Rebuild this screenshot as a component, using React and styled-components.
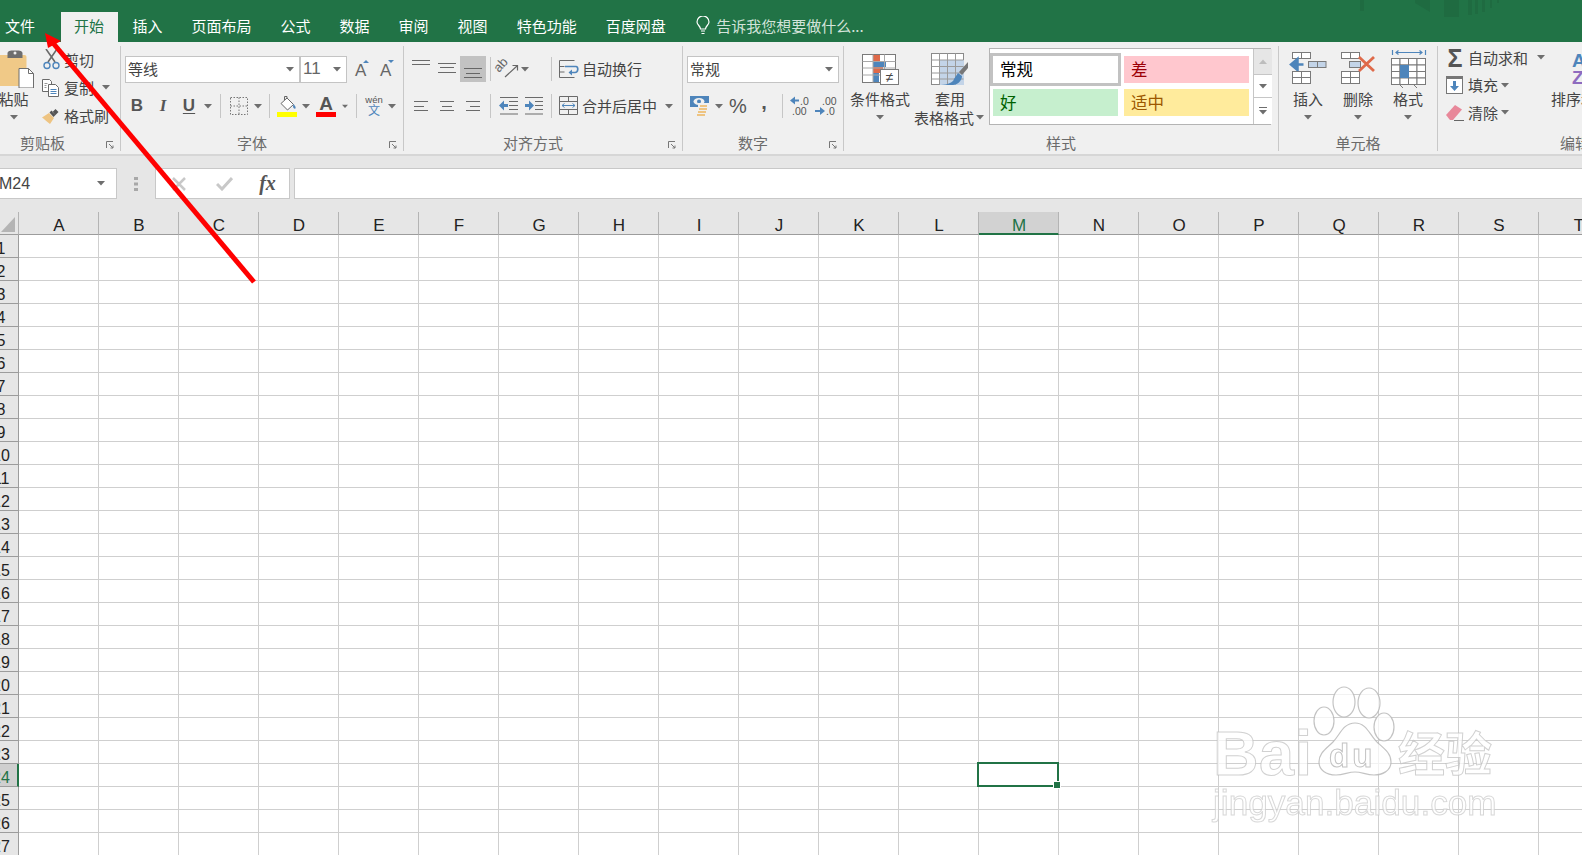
import React from "react";
import styled, { createGlobalStyle } from "styled-components";

const CJK = `"Noto Sans CJK SC", "Liberation Sans", sans-serif`;
const LATIN = `"Liberation Sans", Arial, sans-serif`;
const GREEN = "#217346";
const BLUE = "#4e85bb";
const GRAY = "#6a6a6a";

const Global = createGlobalStyle`
  html, body { margin: 0; padding: 0; background: #fff; }
  body { width: 1582px; height: 855px; overflow: hidden; font-family: ${CJK}; }
  #root { width: 1582px; height: 855px; }
`;

const Page = styled.div`
  position: relative; width: 1582px; height: 855px; overflow: hidden;
  display: flex; flex-direction: column;
`;

/* ---- title + tabs ---- */
const TabBar = styled.div`
  position: relative; flex: none; height: 42px; background: ${GREEN};
  display: flex; align-items: flex-end;
`;
const Tab = styled.div`
  flex: none; height: 30px; line-height: 27px; padding: 0 14.5px;
  font-size: 15px; color: #fff; white-space: nowrap;
`;
const FileTab = styled(Tab)`margin-left: -9.5px; margin-right: 11.5px;`;
const ActiveTab = styled(Tab)`
  background: #f0f0f0; color: ${GREEN}; padding: 0 14px 0 13px;
`;
const Tell = styled.div`
  flex: none; height: 30px; margin-left: 16px; display: flex; align-items: center; gap: 6px;
  font-size: 15px; color: #d3e3da; white-space: nowrap; padding-bottom: 3px; box-sizing: border-box;
`;
const TitleMarks = styled.svg`position: absolute; left: 1340px; top: 0; filter: blur(0.4px);`;

/* ---- ribbon ---- */
const Ribbon = styled.div`
  flex: none; height: 114px; box-sizing: border-box; background: #f0f0f0;
  border-bottom: 2px solid #d6d6d6; display: flex; overflow: hidden;
`;
const Group = styled.div`
  flex: none; width: ${p => p.$w}px; margin-left: ${p => p.$ml || 0}px;
  display: flex; flex-direction: column;
`;
const GroupBody = styled.div`flex: none; height: 91px; display: flex;`;
const GroupLabel = styled.div`
  flex: none; height: 20px; display: flex; align-items: center;
  font-size: 15px; color: #6b6b6b; line-height: 20px;
`;
const GroupName = styled.span`flex: 1; text-align: center;`;
const Launcher = styled.svg`flex: none; margin: 4px 6px 0 6px;`;
const GroupSep = styled.div`
  flex: none; width: 1px; height: 105px; margin-top: 4px; background: #c8c8c8;
`;

const Rows = styled.div`
  display: flex; flex-direction: column; gap: 11px; padding-top: 14px; flex: 1;
`;
const Row = styled.div`
  display: flex; align-items: center; height: 26px; padding-left: ${p => p.$pl || 0}px;
`;
const Tool = styled.div`
  flex: none; width: ${p => p.$w || 26}px; height: 26px; display: flex; align-items: center; justify-content: center;
  background: ${p => (p.$on ? "#c2c2c2" : "transparent")};
`;
const Sep = styled.div`
  flex: none; width: 1px; height: 24px; background: #c6c6c6;
  margin-left: ${p => p.$ml || 0}px; margin-right: ${p => p.$mr || 0}px;
`;
const CaretBox = styled.div`
  flex: none; width: ${p => p.$w || 12}px; margin-left: ${p => p.$ml || 0}px;
  display: flex; align-items: center; justify-content: center;
`;
const Caret = ({ w, ml }) => (
  <CaretBox $w={w} $ml={ml}>
    <svg width="8" height="5" viewBox="0 0 8 5"><path d="M0 0h8L4 4.5z" fill="#6e6e6e" /></svg>
  </CaretBox>
);
const Text = styled.span`
  flex: none; font-size: 15px; color: #444; white-space: nowrap; line-height: 20px;
  margin-left: ${p => p.$ml || 0}px; padding-bottom: ${p => p.$pb || 0}px;
`;
const Combo = styled.div`
  flex: none; box-sizing: border-box; width: ${p => p.$w}px; height: 27px; margin-left: ${p => p.$ml || 0}px;
  background: #fff; border: 1px solid #c4c4c4; display: flex; align-items: center;
  padding: 0 4px 0 ${p => p.$pl || 2}px; font-size: 15px; color: #444;
  justify-content: space-between;
`;
const ComboText = styled.span`padding-bottom: 2px;`;
const Num = styled.span`font-family: ${LATIN}; font-size: 17px; color: #666;`;
const Letter = styled.span`
  font-weight: 700; font-size: 17px; color: #555;
  font-style: ${p => (p.$i ? "italic" : "normal")};
  font-family: ${p => (p.$i ? `"Liberation Serif", serif` : LATIN)};
  text-decoration: ${p => (p.$u ? "underline" : "none")};
  text-underline-offset: 2px;
`;
const Percent = styled.span`font-family: ${LATIN}; font-size: 20px; color: #555;`;
const Comma = styled.span`font-family: ${LATIN}; font-weight: 700; font-size: 20px; color: #555; margin-top: -8px;`;

/* clipboard */
const PasteBtn = styled.div`
  flex: none; width: 57px; display: flex; flex-direction: column; align-items: center; padding-top: 8px;
`;
const BigBtn = styled.div`
  flex: none; width: ${p => p.$w || 50}px; margin-left: ${p => p.$ml || 0}px;
  display: flex; flex-direction: column; align-items: center; padding-top: 8px;
`;
const BigIcon = styled.div`flex: none; width: 40px; height: 39px; display: flex; justify-content: center;`;
const BigLine = styled.div`
  flex: none; height: 19px; line-height: 19px; font-size: 15px; color: #444; white-space: nowrap;
  display: flex; align-items: center; justify-content: center;
`;
const SmallCol = styled.div`
  flex: none; width: ${p => p.$w}px; padding-top: ${p => p.$pt ?? 4}px; display: flex; flex-direction: column;
`;
const SmallRow = styled.div`
  height: ${p => p.$h || 27.5}px; display: flex; align-items: center; padding-left: ${p => p.$pl || 0}px;
`;
const SmallIcon = styled.div`
  flex: none; width: ${p => p.$w || 18}px; margin-right: ${p => p.$mr || 4}px; display: flex; align-items: center; justify-content: center;
  margin-top: ${p => p.$mt || 0}px;
`;
const Sigma = styled.span`font-family: ${LATIN}; font-weight: 700; font-size: 25px; line-height: 24px; color: #555;`;

/* gallery */
const Gallery = styled.div`
  flex: none; width: 282px; height: 77px; margin: 6px 0 0 3px; box-sizing: border-box;
  border: 1px solid #b4b4b4; background: #fff; display: flex;
`;
const StyleGrid = styled.div`
  flex: none; width: 263px; box-sizing: border-box; padding: 7px 0 0 3px;
  display: grid; grid-template-columns: 125px 125px; grid-auto-rows: 27px; gap: 6px;
`;
const StyleCell = styled.div`
  background: ${p => p.$bg}; color: ${p => p.$fg}; font-size: 16.5px; line-height: 27px; padding-left: 7px;
  outline: ${p => (p.$sel ? "3px solid #c2c2c2" : "none")};
`;
const GalleryScroll = styled.div`
  flex: none; width: 18px; border-left: 1px solid #c6c6c6; display: flex; flex-direction: column;
`;
const ScrollPart = styled.div`
  height: ${p => p.$h}px; box-sizing: border-box; display: flex; align-items: center; justify-content: center;
  background: ${p => (p.$dim ? "#e6e6e6" : "#fff")};
  border-bottom: ${p => (p.$last ? "none" : "1px solid #c6c6c6")};
`;

/* formula bar */
const FormulaBar = styled.div`
  flex: none; height: 56px; box-sizing: border-box; background: #e6e6e6; padding-top: 12px;
  display: flex; align-items: flex-start;
`;
const FieldBox = styled.div`
  flex: none; box-sizing: border-box; height: 31px; background: #fff; border: 1px solid #c8c8c8; display: flex; align-items: center;
`;
const NameBox = styled(FieldBox)`
  width: 118px; margin-left: -1px; padding: 0 10px 0 0; justify-content: space-between;
  font-family: ${LATIN}; font-size: 16px; color: #444;
`;
const NameText = styled.span`margin-left: -1px;`;
const Dots = styled.div`
  flex: none; width: 38px; height: 31px; display: flex; align-items: center; justify-content: center;
`;
const FxBox = styled(FieldBox)`width: 135px;`;
const FxSlot = styled.div`flex: none; width: ${p => p.$w}px; display: flex; justify-content: center; align-items: center;`;
const FxText = styled.span`font-family: "Liberation Serif", serif; font-style: italic; font-weight: 700; font-size: 20px; color: #555;`;
const FormulaInput = styled(FieldBox)`flex: 1; margin-left: 4px; margin-right: -2px;`;

/* sheet */
const Sheet = styled.div`flex: 1; background: #fff; overflow: hidden; display: flex; flex-direction: column;`;
const SheetRow = styled.div`flex: none; height: 23px; display: flex;`;
const Corner = styled.div`
  flex: none; width: 19px; box-sizing: border-box; background: #e6e6e6;
  border-right: 1px solid #b4b4b4; border-bottom: 1px solid #9c9c9c;
  display: flex; align-items: flex-end; padding: 0 0 2px 1px;
`;
const ColHead = styled.div`
  flex: none; width: 80px; box-sizing: border-box; background: ${p => (p.$sel ? "#d2d2d2" : "#e6e6e6")};
  border-right: 1px solid #b4b4b4; padding-left: 1px;
  border-bottom: ${p => (p.$sel ? `2px solid ${GREEN}` : "1px solid #9c9c9c")};
  color: ${p => (p.$sel ? GREEN : "#222")};
  font-family: ${LATIN}; font-size: 17px; line-height: 27px; text-align: center;
`;
const RowHead = styled.div`
  flex: none; width: 19px; box-sizing: border-box; overflow: hidden; background: ${p => (p.$sel ? "#cfcfcf" : "#e6e6e6")};
  border-right: ${p => (p.$sel ? `2px solid ${GREEN}` : "1px solid #9c9c9c")};
  border-bottom: 1px solid #9c9c9c;
  color: ${p => (p.$sel ? GREEN : "#222")};
  font-family: ${LATIN}; font-size: 16px; line-height: 27px;
`;
const RowNum = styled.div`width: 33px; margin-left: -15.5px; text-align: center;`;
const Cell = styled.div`
  flex: none; width: 80px; box-sizing: border-box; position: relative;
  border-right: 1px solid #cfcfcf; border-bottom: 1px solid #cfcfcf;
`;
const Selection = styled.div`
  position: absolute; left: -2px; top: -2px; width: 82px; height: 25px; box-sizing: border-box;
  border: 2px solid ${GREEN}; z-index: 2;
`;
const Handle = styled.div`
  position: absolute; right: -4px; bottom: -4px; width: 6px; height: 6px; background: ${GREEN}; border: 1px solid #fff;
`;

/* overlays */
const ArrowLayer = styled.svg`position: absolute; left: 0; top: 0; z-index: 5; pointer-events: none;`;
const Watermark = styled.div`
  position: absolute; left: 1213px; top: 686px; width: 300px; z-index: 3; pointer-events: none;
  display: flex; flex-direction: column; filter: blur(0.5px);
`;
const WmTop = styled.div`display: flex; align-items: flex-end; height: 90px;`;
const WmBai = styled.span`
  font-family: ${LATIN}; font-weight: 700; font-size: 63px; line-height: 60px; width: 99px; margin-bottom: -7px; letter-spacing: 0.5px;
  color: rgba(255,255,255,.72); -webkit-text-stroke: 1px rgba(190,190,190,.7);
`;
const WmJy = styled.span`
  font-family: ${CJK}; font-weight: 700; font-size: 47px; line-height: 52px; margin-left: 2px; margin-bottom: -1px; white-space: nowrap;
  color: rgba(255,255,255,.72); -webkit-text-stroke: 1px rgba(190,190,190,.7);
`;
const WmUrl = styled.span`
  font-family: ${LATIN}; font-size: 35.2px; line-height: 40px; margin-top: 7px; white-space: nowrap;
  color: rgba(255,255,255,.72); -webkit-text-stroke: 1px rgba(200,200,200,.7);
`;

/* ---- drawings ---- */
const Lines = ({ ys, lens, anchor = "l", w = 18, color = GRAY }) => (
  <svg width={w} height="26" viewBox={`0 0 ${w} 26`}>
    {ys.map((y, i) => {
      const l = lens[i];
      const x = anchor === "l" ? 0 : anchor === "c" ? (w - l) / 2 : w - l;
      return <path key={i} d={`M${x} ${y + 0.5}h${l}`} stroke={color} strokeWidth="1" />;
    })}
  </svg>
);
const Bulb = () => (
  <svg width="14" height="19" viewBox="0 0 14 19" fill="none" stroke="#fff" strokeWidth="1.2">
    <path d="M4.5 13C4.5 10 1 9 1 6a6 6 0 0 1 12 0c0 3-3.500 4-3.500 7z" />
    <path d="M5 15h4M5.500 17.500h3" />
  </svg>
);
const Scissors = () => (
  <svg width="17" height="21" viewBox="0 0 17 21" fill="none">
    <path d="M3 0l9 13M14 0L5 13" stroke="#6a6a6a" strokeWidth="1.6" />
    <circle cx="4" cy="16.500" r="3" stroke={BLUE} strokeWidth="1.4" />
    <circle cx="13" cy="16.500" r="3" stroke={BLUE} strokeWidth="1.4" />
  </svg>
);
const CopyIcon = () => (
  <svg width="18" height="18" viewBox="0 0 18 18" fill="#fff" stroke="#6a6a6a">
    <path d="M.5.500h7l2 2v10h-9z" />
    <path d="M6.500 5.500h7l3 3v9h-10z" />
    <path d="M8.500 10.500h6M8.500 12.500h6M8.500 14.500h6" stroke={BLUE} />
    <path d="M2.500 4.500h3M2.500 6.500h2M2.500 8.500h2" stroke="#999" />
  </svg>
);
const Brush = () => (
  <svg width="18" height="16" viewBox="0 0 18 16">
    <path d="M0 9.500L7 5l5 5-4 6C5 14 2 11 0 9.500z" fill="#eec482" />
    <path d="M7.500 4.500l4 4.500 2-2-4-4.500zM10.500 4l3-3 3 3-3 3z" fill="#555" />
  </svg>
);
const PasteIcon = () => (
  <svg width="40" height="38" viewBox="-6.500 0 40 38">
    <rect x="-8" y="5" width="34" height="31" rx="2" fill="#f0c987" />
    <path d="M7 8V3.500C7 1 9 .500 14.500 .500S22 1 22 3.500V8z" fill="#6e6e6e" />
    <circle cx="14.500" cy="3" r="1.500" fill="#f0f0f0" />
    <path d="M18.500 18.500h9.500l5 5v14.500h-14.500z" fill="#fff" stroke="#6e6e6e" />
    <path d="M28 18.500v5h5" fill="none" stroke="#6e6e6e" />
  </svg>
);
const FontSize = ({ up }) => (
  <svg width="20" height="22" viewBox="0 0 20 22">
    <text x={up ? 5 : 4} y="18" fontFamily="Liberation Sans, sans-serif" fontSize="17" fill="#666">A</text>
    <path d={up ? "M13 5l3-3 3 3z" : "M12 2l3 3 3-3z"} fill={BLUE} />
  </svg>
);
const BordersIcon = () => (
  <svg width="18" height="18" viewBox="0 0 18 18" fill="none" stroke="#777" strokeDasharray="1.500 1.500">
    <path d="M.5.500h17v17H.5zM9 .500v17M.5 9h17" />
  </svg>
);
const FillIcon = () => (
  <svg width="20" height="22" viewBox="0 0 20 22">
    <path d="M4 8.500L10 3l6.500 6.500L10.500 15z" fill="#fff" stroke="#666" />
    <path d="M7.500 5V1.500h2.500V4" fill="none" stroke="#666" />
    <path d="M16.500 9c1.500 1.500 2.500 3 2 4.500-1.200.5-2.500-.5-2.500-2z" fill={BLUE} />
    <rect y="17" width="20" height="5" fill="#ffff00" />
  </svg>
);
const ColorIcon = () => (
  <svg width="20" height="22" viewBox="0 0 20 22">
    <text x="10" y="15" textAnchor="middle" fontFamily="Liberation Sans, sans-serif" fontWeight="700" fontSize="19" fill="#555">A</text>
    <rect y="17" width="20" height="5" fill="#ff0000" />
  </svg>
);
const Wen = () => (
  <svg width="20" height="22" viewBox="0 0 20 22">
    <text x="10" y="8" textAnchor="middle" fontFamily="Liberation Sans, sans-serif" fontSize="9.500" fill="#555">wén</text>
    <text x="10" y="20" textAnchor="middle" fontFamily="Noto Sans CJK SC, sans-serif" fontSize="12" fill={BLUE}>文</text>
  </svg>
);
const Orient = () => (
  <svg width="24" height="22" viewBox="0 0 24 22" overflow="visible">
    <text transform="translate(3 15) rotate(-48)" fontFamily="Liberation Sans, sans-serif" fontSize="13" fill="#666">ab</text>
    <path d="M9 19L21 8M16.500 7.500H21.500V12.500" stroke="#666" strokeWidth="1.200" fill="none" />
  </svg>
);
const WrapIcon = () => (
  <svg width="20" height="18" viewBox="0 0 20 18" fill="none" stroke="#6a6a6a">
    <path d="M.5 17.500V.500h15M.5 6.500h5M.5 12h5M.5 17.500h15" />
    <path d="M6 6.500h11c2.500 0 2.500 6-1 6H11" stroke={BLUE} strokeWidth="1.700" />
    <path d="M13 9.500L9.500 12.500 13 15.500z" fill={BLUE} stroke="none" />
  </svg>
);
const MergeIcon = () => (
  <svg width="20" height="20" viewBox="0 0 20 20" fill="none" stroke="#6a6a6a">
    <path d="M.5.500h18v18H.5zM.5 5.500h18M.5 13.500h18M9.500.500v5M9.500 13.500v5" />
    <path d="M3 9.500h13M5.500 7.500L3 9.500l2.500 2M13.500 7.500l2.500 2-2.500 2" stroke={BLUE} />
  </svg>
);
const IndentIcon = ({ inc }) => (
  <svg width="19" height="18" viewBox="0 0 19 18" fill="none">
    <path d={inc ? "M0 .500h18M10 4.500h8M10 8.500h8M10 12.500h8M0 17h18" : "M1 .500h18M10 4.500h9M10 8.500h9M10 12.500h9M1 17h18"} stroke="#6a6a6a" />
    {inc
      ? <path d="M0 7h4V3.500L9 8.500l-5 5V10H0z" fill={BLUE} />
      : <path d="M9 7H5V3.500L0 8.500l5 5V10h4z" fill={BLUE} />}
  </svg>
);
const Currency = () => (
  <svg width="20" height="20" viewBox="0 0 20 20">
    <rect x="0" y="0" width="19" height="11" fill={BLUE} />
    <ellipse cx="9" cy="5.500" rx="5.500" ry="3.500" fill="#f0f0f0" />
    <circle cx="9" cy="5.500" r="2" fill={BLUE} />
    <rect x="8" y="7" width="12" height="13" fill="#f0f0f0" />
    <path d="M10 10h7M9 13h8M8 16h8M7 19h8" stroke="#eec482" strokeWidth="2" />
  </svg>
);
const Decimal = ({ inc }) => (
  <svg width="22" height="20" viewBox="0 0 22 20" fontFamily="Liberation Sans, sans-serif" fontSize="10.500" fill="#555">
    {inc ? (
      <>
        <path d="M6 3.500v-3L1 4.500l5 4v-3h4v-2z" fill={BLUE} />
        <text x="11" y="8.500">.0</text>
        <text x="3" y="18.500">.00</text>
      </>
    ) : (
      <>
        <text x="7" y="8.500">.00</text>
        <path d="M5 14v-3l5 4-5 4v-3H0v-2z" fill={BLUE} />
        <text x="11" y="18.500">.0</text>
      </>
    )}
  </svg>
);
const CondFormat = () => (
  <svg width="40" height="40" viewBox="0 0 40 40">
    <rect x="2.500" y="4.500" width="33" height="28" fill="#fff" stroke="#7a7a7a" />
    <rect x="13" y="5" width="7" height="6" fill="#df6a4a" />
    <rect x="13" y="11" width="13" height="6" fill={BLUE} />
    <rect x="13" y="17" width="10" height="6" fill="#df6a4a" />
    <rect x="13" y="23" width="6" height="9" fill={BLUE} />
    <path d="M2.500 11.500h33M2.500 18h33M2.500 25h33M13 4.500v28M24.500 4.500v28" stroke="#a8a8a8" fill="none" />
    <rect x="20.500" y="19.500" width="18" height="15" fill="#fff" stroke="#7a7a7a" />
    <text x="29.500" y="32" textAnchor="middle" fontFamily="Liberation Sans, sans-serif" fontSize="14" fill="#444">≠</text>
  </svg>
);
const TableFormat = () => (
  <svg width="40" height="40" viewBox="0 0 40 40">
    <rect x="1.500" y="3.500" width="32" height="31" fill="#fff" stroke="#8a8a8a" />
    <rect x="10" y="10" width="24" height="25" fill="#c3d4e8" />
    <path d="M1.500 10h32M1.500 16.500h32M1.500 23h32M1.500 29h32M9.500 3.500v31M17.500 3.500v31M25.500 3.500v31" stroke="#9a9a9a" fill="none" />
    <path d="M38 12l-9 10 3 3 6-7z" fill="#777" />
    <path d="M24 29l4-6 4 3c0 5-5 9-9 9H11c6-.5 12-2 13-6z" fill={BLUE} />
  </svg>
);
const CellGrid = ({ x, y, cols, rows, w = 9, h = 6, c = "#7a7a7a" }) => {
  const parts = [];
  for (let r = 0; r < rows; r++) for (let k = 0; k < cols; k++)
    parts.push(<rect key={`${r}-${k}`} x={x + k * w} y={y + r * h} width={w} height={h} fill="#fff" stroke={c} />);
  return <g>{parts}</g>;
};
const InsertIcon = () => (
  <svg width="40" height="40" viewBox="0 0 40 40">
    <CellGrid x={4.500} y={2.500} cols={2} rows={1} />
    <path d="M15.500 14.500H4M9.500 9L3 14.500l6.500 5.500z" stroke={BLUE} strokeWidth="2.500" fill={BLUE} />
    <g fill="#c3d4e8" stroke="#7a7a7a"><rect x="20.500" y="11.500" width="9" height="6" /><rect x="29.500" y="11.500" width="8.500" height="6" /></g>
    <CellGrid x={4.500} y={21.500} cols={2} rows={2} />
  </svg>
);
const DeleteIcon = () => (
  <svg width="40" height="40" viewBox="0 0 40 40">
    <CellGrid x={3.500} y={2.500} cols={2} rows={1} />
    <rect x="11.500" y="11.500" width="11" height="6" fill="#c3d4e8" stroke="#7a7a7a" />
    <CellGrid x={3.500} y={21.500} cols={2} rows={2} />
    <path d="M21 7l15 14M36 7L21 21" stroke="#df6a4a" strokeWidth="2.800" fill="none" />
  </svg>
);
const FormatIcon = () => (
  <svg width="40" height="40" viewBox="0 0 40 40">
    <path d="M4.500 0v5M37.500 0v5M8 2.500h26M10.500 .5L8 2.500l2.500 2M31.500 .5L34 2.500l-2.500 2" stroke={BLUE} strokeWidth="1.200" fill="none" />
    <CellGrid x={3.500} y={8.500} cols={4} rows={4} w={8.500} h={6.500} c="#7a7a7a" />
    <rect x="12" y="15" width="9" height="13" fill={BLUE} />
    <path d="M3 35h34v5H3z" fill="#f0f0f0" />
    <path d="M12 35l3 3M26 35l3 3" stroke="#7a7a7a" />
  </svg>
);
const FillDown = () => (
  <svg width="18" height="19" viewBox="0 0 18 19">
    <rect x=".5" y=".5" width="16" height="17" fill="#fff" stroke="#777" />
    <rect x="0" y="0" width="17" height="3" fill="#777" />
    <path d="M7 5h3v5h3l-4.500 5L4 10h3z" fill={BLUE} />
  </svg>
);
const Eraser = () => (
  <svg width="18" height="17" viewBox="0 0 18 17">
    <path d="M0 11l9-10 7 4.500-9 10.500H4z" fill="#e8889a" />
    <path d="M8 16.500h10" stroke="#666" />
  </svg>
);
const SortIcon = () => (
  <svg width="40" height="40" viewBox="0 0 40 40" fontFamily="Liberation Sans, sans-serif" fontWeight="700" fontSize="19">
    <text x="3" y="17" fill={BLUE}>A</text>
    <text x="3" y="34" fill="#8e6bbf">Z</text>
  </svg>
);

const COLS = "ABCDEFGHIJKLMNOPQRST".split("");
const ROWS = Array.from({ length: 27 }, (_, i) => i + 1);

const Launch = () => (
  <Launcher width="8" height="8" viewBox="0 0 8 8" fill="none" stroke="#777">
    <path d="M.5 7V.5H7M3 3l4 4M7 4.500V7H4.500" />
  </Launcher>
);

export default function App() {
  return (
    <Page>
      <Global />
      <TabBar>
        <FileTab>文件</FileTab>
        <ActiveTab>开始</ActiveTab>
        <Tab>插入</Tab>
        <Tab>页面布局</Tab>
        <Tab>公式</Tab>
        <Tab>数据</Tab>
        <Tab>审阅</Tab>
        <Tab>视图</Tab>
        <Tab>特色功能</Tab>
        <Tab>百度网盘</Tab>
        <Tell><Bulb />告诉我您想要做什么...</Tell>
        <TitleMarks width="170" height="20" viewBox="0 0 170 20" fill="#1f6b41">
          <rect x="20" y="0" width="4" height="11" />
          <path d="M75 0h15v12l-15-9z" />
          <rect x="104" y="0" width="15" height="17" />
          <rect x="128" y="0" width="4" height="15" />
          <rect x="135" y="0" width="3" height="14" />
          <rect x="142" y="0" width="3" height="12" />
          <rect x="150" y="0" width="2" height="8" />
          <rect x="157" y="0" width="2" height="3" />
        </TitleMarks>
      </TabBar>

      <Ribbon>
        <Group $w={135} $ml={-15}>
          <GroupBody>
            <PasteBtn>
              <BigIcon><PasteIcon /></BigIcon>
              <BigLine>粘贴</BigLine>
              <BigLine><Caret /></BigLine>
            </PasteBtn>
            <SmallCol $w={78} $pt={3.5}>
              <SmallRow $h={28}><SmallIcon><Scissors /></SmallIcon><Text>剪切</Text></SmallRow>
              <SmallRow $h={28}><SmallIcon><CopyIcon /></SmallIcon><Text>复制</Text><Caret w={8} ml={8} /></SmallRow>
              <SmallRow $h={28}><SmallIcon><Brush /></SmallIcon><Text>格式刷</Text></SmallRow>
            </SmallCol>
          </GroupBody>
          <GroupLabel><GroupName>剪贴板</GroupName><Launch /></GroupLabel>
        </Group>
        <GroupSep />

        <Group $w={282}>
          <GroupBody>
            <Rows>
              <Row $pl={4}>
                <Combo $w={175}><ComboText>等线</ComboText><Caret w={10} /></Combo>
                <Combo $w={47}><Num>11</Num><Caret w={10} /></Combo>
                <Tool><FontSize up /></Tool>
                <Tool><FontSize /></Tool>
              </Row>
              <Row $pl={3}>
                <Tool><Letter>B</Letter></Tool>
                <Tool><Letter $i>I</Letter></Tool>
                <Tool><Letter $u>U</Letter></Tool>
                <Caret />
                <Sep $ml={6} $mr={4} />
                <Tool $w={27}><BordersIcon /></Tool>
                <Caret />
                <Sep $ml={5} $mr={2} />
                <Tool $w={30}><FillIcon /></Tool>
                <Caret w={8} />
                <Tool $w={32}><ColorIcon /></Tool>
                <Caret w={6} />
                <Sep $ml={8} $mr={4} />
                <Tool $w={25}><Wen /></Tool>
                <Caret />
              </Row>
            </Rows>
          </GroupBody>
          <GroupLabel><GroupName>字体</GroupName><Launch /></GroupLabel>
        </Group>
        <GroupSep />

        <Group $w={278}>
          <GroupBody>
            <Rows>
              <Row $pl={4}>
                <Tool><Lines ys={[4, 8]} lens={[18, 18]} /></Tool>
                <Tool><Lines ys={[7, 11, 16]} lens={[18, 14, 18]} anchor="c" /></Tool>
                <Tool $on><Lines ys={[12, 17, 21]} lens={[18, 14, 18]} anchor="c" color="#666" /></Tool>
                <Sep $ml={4} $mr={4} />
                <Tool><Orient /></Tool>
                <Caret w={8} />
                <Sep $ml={22} $mr={7} />
                <WrapIcon />
                <Text $ml={3} $pb={1}>自动换行</Text>
              </Row>
              <Row $pl={4}>
                <Tool><Lines ys={[8, 13, 17]} lens={[14, 10, 14]} w={14} /></Tool>
                <Tool><Lines ys={[8, 13, 17]} lens={[14, 10, 14]} w={14} anchor="c" /></Tool>
                <Tool><Lines ys={[8, 13, 17]} lens={[14, 10, 14]} w={14} anchor="r" /></Tool>
                <Sep $ml={4} $mr={4} />
                <Tool><IndentIcon /></Tool>
                <Tool><IndentIcon inc /></Tool>
                <Sep $ml={4} $mr={7} />
                <MergeIcon />
                <Text $ml={3} $pb={1}>合并后居中</Text>
                <Caret w={24} />
              </Row>
            </Rows>
          </GroupBody>
          <GroupLabel><GroupName>对齐方式</GroupName><Launch /></GroupLabel>
        </Group>
        <GroupSep />

        <Group $w={160}>
          <GroupBody>
            <Rows>
              <Row $pl={4}><Combo $w={152}><ComboText>常规</ComboText><Caret w={10} /></Combo></Row>
              <Row $pl={4}>
                <Tool><Currency /></Tool>
                <Caret />
                <Tool><Percent>%</Percent></Tool>
                <Tool><Comma>,</Comma></Tool>
                <Sep $ml={5} $mr={4} />
                <Tool><Decimal inc /></Tool>
                <Tool><Decimal /></Tool>
              </Row>
            </Rows>
          </GroupBody>
          <GroupLabel><GroupName>数字</GroupName><Launch /></GroupLabel>
        </Group>
        <GroupSep />

        <Group $w={434}>
          <GroupBody>
            <BigBtn $w={60} $ml={6}>
              <BigIcon><CondFormat /></BigIcon>
              <BigLine>条件格式</BigLine>
              <BigLine><Caret /></BigLine>
            </BigBtn>
            <BigBtn $w={72} $ml={4}>
              <BigIcon><TableFormat /></BigIcon>
              <BigLine>套用</BigLine>
              <BigLine>表格格式<Caret /></BigLine>
            </BigBtn>
            <Gallery>
              <StyleGrid>
                <StyleCell $bg="#fff" $fg="#000" $sel>常规</StyleCell>
                <StyleCell $bg="#ffc7ce" $fg="#9c0006">差</StyleCell>
                <StyleCell $bg="#c6efce" $fg="#006100">好</StyleCell>
                <StyleCell $bg="#ffeb9c" $fg="#9c5700">适中</StyleCell>
              </StyleGrid>
              <GalleryScroll>
                <ScrollPart $h={26} $dim>
                  <svg width="8" height="5" viewBox="0 0 8 5"><path d="M0 5h8L4 .5z" fill="#bdbdbd" /></svg>
                </ScrollPart>
                <ScrollPart $h={23}><Caret w={10} /></ScrollPart>
                <ScrollPart $h={26} $last>
                  <svg width="8" height="8" viewBox="0 0 8 8"><path d="M0 .500h8" stroke="#6e6e6e" /><path d="M0 3h8L4 7.500z" fill="#6e6e6e" /></svg>
                </ScrollPart>
              </GalleryScroll>
            </Gallery>
          </GroupBody>
          <GroupLabel><GroupName>样式</GroupName></GroupLabel>
        </Group>
        <GroupSep />

        <Group $w={158}>
          <GroupBody>
            <BigBtn $ml={4}>
              <BigIcon><InsertIcon /></BigIcon>
              <BigLine>插入</BigLine>
              <BigLine><Caret /></BigLine>
            </BigBtn>
            <BigBtn>
              <BigIcon><DeleteIcon /></BigIcon>
              <BigLine>删除</BigLine>
              <BigLine><Caret /></BigLine>
            </BigBtn>
            <BigBtn>
              <BigIcon><FormatIcon /></BigIcon>
              <BigLine>格式</BigLine>
              <BigLine><Caret /></BigLine>
            </BigBtn>
          </GroupBody>
          <GroupLabel><GroupName>单元格</GroupName></GroupLabel>
        </Group>
        <GroupSep />

        <Group $w={274}>
          <GroupBody>
            <SmallCol $w={113} $pt={2}>
              <SmallRow $pl={7}><SmallIcon $w={20} $mr={3}><Sigma>Σ</Sigma></SmallIcon><Text>自动求和</Text><Caret w={8} ml={9} /></SmallRow>
              <SmallRow $pl={7}><SmallIcon $w={20} $mr={3}><FillDown /></SmallIcon><Text>填充</Text><Caret w={8} ml={3} /></SmallRow>
              <SmallRow $pl={7}><SmallIcon $w={20} $mr={3}><Eraser /></SmallIcon><Text>清除</Text><Caret w={8} ml={3} /></SmallRow>
            </SmallCol>
            <BigBtn $w={75}>
              <BigIcon><SortIcon /></BigIcon>
              <BigLine>排序和筛选</BigLine>
            </BigBtn>
          </GroupBody>
          <GroupLabel><GroupName>编辑</GroupName></GroupLabel>
        </Group>
      </Ribbon>

      <FormulaBar>
        <NameBox><NameText>M24</NameText><Caret w={10} /></NameBox>
        <Dots>
          <svg width="4" height="14" viewBox="0 0 4 14" fill="#a8a8a8"><rect width="4" height="3" /><rect y="5.500" width="4" height="3" /><rect y="11" width="4" height="3" /></svg>
        </Dots>
        <FxBox>
          <FxSlot $w={46}>
            <svg width="14" height="14" viewBox="0 0 14 14" stroke="#c8c8c8" strokeWidth="2.500"><path d="M1 1l12 12M13 1L1 13" /></svg>
          </FxSlot>
          <FxSlot $w={44}>
            <svg width="17" height="14" viewBox="0 0 17 14" fill="none" stroke="#c8c8c8" strokeWidth="3"><path d="M1 7l5 5L16 1" /></svg>
          </FxSlot>
          <FxSlot $w={43}><FxText>fx</FxText></FxSlot>
        </FxBox>
        <FormulaInput />
      </FormulaBar>

      <Sheet>
        <SheetRow>
          <Corner>
            <svg width="15" height="15" viewBox="0 0 15 15"><path d="M14 0v15H0z" fill="#b4b4b4" /></svg>
          </Corner>
          {COLS.map(c => <ColHead key={c} $sel={c === "M"}>{c}</ColHead>)}
        </SheetRow>
        {ROWS.map(r => (
          <SheetRow key={r}>
            <RowHead $sel={r === 24}><RowNum>{r}</RowNum></RowHead>
            {COLS.map(c => (
              <Cell key={c}>
                {r === 24 && c === "M" && <Selection><Handle /></Selection>}
              </Cell>
            ))}
          </SheetRow>
        ))}
      </Sheet>

      <Watermark>
        <WmTop>
          <WmBai>Bai</WmBai>
          <svg width="84" height="90" viewBox="0 0 84 90" fill="rgba(255,255,255,.72)" stroke="rgba(180,180,180,.8)" strokeWidth="1.200">
            <ellipse cx="12" cy="35" rx="10" ry="14" />
            <ellipse cx="32" cy="16" rx="11" ry="15" />
            <ellipse cx="57" cy="17" rx="11" ry="15" />
            <ellipse cx="72" cy="41" rx="10" ry="14" />
            <path d="M43 37C55 37 58 50 66 57C74 64 79 68 79 76C79 85 70 89 62 89C54 89 50 86 43 86C36 86 32 89 24 89C14 89 7 84 7 76C7 67 14 63 21 56C28 49 31 37 43 37Z" />
            <text x="17" y="81" fontFamily="Liberation Sans, sans-serif" fontWeight="700" fontSize="33" letterSpacing="3" strokeWidth="1">du</text>
          </svg>
          <WmJy>经验</WmJy>
        </WmTop>
        <WmUrl>jingyan.baidu.com</WmUrl>
      </Watermark>

      <ArrowLayer width="300" height="300" viewBox="0 0 300 300">
        <path d="M254 282L53 43" stroke="#ff0000" strokeWidth="5" fill="none" />
        <path d="M45 33L61 41L48 48z" fill="#ff0000" />
      </ArrowLayer>
    </Page>
  );
}
